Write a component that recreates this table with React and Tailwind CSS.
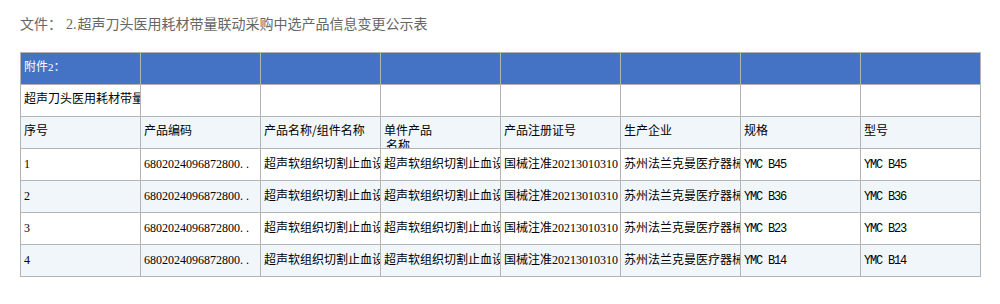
const rows = [
  { no: "1", spec: "YMC B45", model: "YMC B45" },
  { no: "2", spec: "YMC B36", model: "YMC B36" },
  { no: "3", spec: "YMC B23", model: "YMC B23" },
  { no: "4", spec: "YMC B14", model: "YMC B14" },
];

const headers = ["序号", "产品编码", "产品名称/组件名称", null, "产品注册证号", "生产企业", "规格", "型号"];

function Num({ children }) {
  return <span className="font-['Liberation_Serif',serif]">{children}</span>;
}

function Dots() {
  return (
    <span className="font-['Liberation_Serif',serif]">
      <span className="inline-block w-[6px]">.</span>
      <span className="inline-block w-[6px]">.</span>
    </span>
  );
}

function Latin({ children }) {
  return <span className="font-['Liberation_Mono',monospace] text-[12px] tracking-[-1.2px]">{children}</span>;
}

function Cell({ children, className = "" }) {
  return (
    <div className={`h-[32px] overflow-hidden whitespace-nowrap border-r border-b border-[#b4b4b4] pl-[3px] text-[12px] leading-[15px] ${className}`}>
      {children}
    </div>
  );
}

export default function App() {
  return (
    <div className="w-[1000px] h-[304px] bg-white px-[20px] pt-[13px] font-['Noto_Sans_CJK_SC',sans-serif] text-black">
      <div className="text-[14px] leading-[20px] text-[#666]">
        文件：<span className="font-['Liberation_Serif',serif] text-[14px] pl-[4px] pr-[1px]">2.</span>超声刀头医用耗材带量联动采购中选产品信息变更公示表
      </div>

      <div className="mt-[17px] grid w-[961px] grid-cols-[repeat(8,120px)] border-l border-t border-[#b4b4b4]">
        {/* blue title row */}
        <Cell className="bg-[#4472c4] pt-[5px] text-white">
          附件<span className="font-['Liberation_Serif',serif] text-[11px]">2</span>：
        </Cell>
        {Array.from({ length: 7 }).map((_, i) => (
          <Cell key={i} className="bg-[#4472c4]" />
        ))}

        {/* caption row */}
        <Cell className="bg-white pt-[5px]">超声刀头医用耗材带量联动采购中选产品信息变更公示表</Cell>
        {Array.from({ length: 7 }).map((_, i) => (
          <Cell key={i} className="bg-white" />
        ))}

        {/* column headers */}
        {headers.map((h, i) => (
          <Cell key={i} className="bg-[#f1f6fa] pt-[5px]">
            {h ?? (
              <>
                单件产品
                <br />
                <span className="ml-[2px]">名称</span>
              </>
            )}
          </Cell>
        ))}

        {/* data rows */}
        {rows.map((r, idx) => {
          const bg = idx % 2 === 0 ? "bg-white" : "bg-[#f1f6fa]";
          return [
            <Cell key={`a${idx}`} className={`${bg} pt-[6px]`}><Num>{r.no}</Num></Cell>,
            <Cell key={`b${idx}`} className={`${bg} pt-[6px]`}><Num>6802024096872800</Num><Dots /></Cell>,
            <Cell key={`c${idx}`} className={`${bg} pt-[6px]`}>超声软组织切割止血设备刀头</Cell>,
            <Cell key={`d${idx}`} className={`${bg} pt-[6px]`}>超声软组织切割止血设备刀头</Cell>,
            <Cell key={`e${idx}`} className={`${bg} pt-[6px]`}>国械注准<Num>20213010310</Num></Cell>,
            <Cell key={`f${idx}`} className={`${bg} pt-[6px]`}>苏州法兰克曼医疗器械有限公司</Cell>,
            <Cell key={`g${idx}`} className={`${bg} pt-[6px]`}><Latin>{r.spec}</Latin></Cell>,
            <Cell key={`h${idx}`} className={`${bg} pt-[6px]`}><Latin>{r.model}</Latin></Cell>,
          ];
        })}
      </div>
    </div>
  );
}
